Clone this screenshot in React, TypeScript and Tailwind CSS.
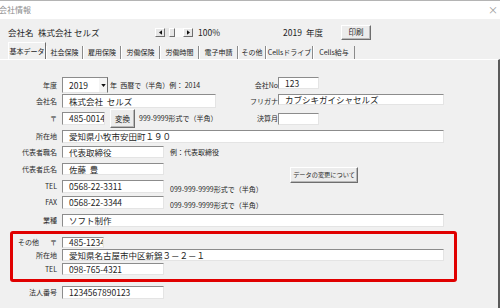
import type { ReactNode } from 'react'

const TABS: { label: string; w: string }[] = [
  { label: '社会保険', w: 'w-[37px]' },
  { label: '雇用保険', w: 'w-[38px]' },
  { label: '労働保険', w: 'w-[39px]' },
  { label: '労働時間', w: 'w-[39px]' },
  { label: '電子申請', w: 'w-[39px]' },
  { label: 'その他', w: 'w-[28px]' },
  { label: 'Cellsドライブ', w: 'w-[47px]' },
  { label: 'Cells給与', w: 'w-[42px]' },
]

// Sunken white text box, like the Excel form controls.
function Field({ className, children }: { className: string; children?: ReactNode }) {
  return (
    <div
      className={`flex shrink-0 items-center overflow-hidden whitespace-nowrap border border-t-[#8c8c8c] border-l-[#8c8c8c] border-r-[#e4e4e4] border-b-[#e4e4e4] bg-white pl-[6px] text-[8.5px] leading-none text-[#1e1e1e] ${className}`}
    >
      {children}
    </div>
  )
}

function Label({ children, className = 'w-[57px]' }: { children: ReactNode; className?: string }) {
  return (
    <div className={`shrink-0 text-right text-[7px] leading-none text-[#2a2a2a] ${className}`}>{children}</div>
  )
}

function Btn({ className, children }: { className: string; children: ReactNode }) {
  return (
    <div
      className={`flex shrink-0 items-center justify-center whitespace-nowrap border border-t-white border-l-white border-r-[#6e6e6e] border-b-[#6e6e6e] bg-[#ececec] leading-none text-[#1e1e1e] shadow-[inset_-1px_-1px_0_#b8b8b8] ${className}`}
    >
      {children}
    </div>
  )
}

function Arrow({ dir }: { dir: 'l' | 'r' }) {
  return (
    <div className="flex h-[9px] w-[10px] items-center justify-center border border-t-white border-l-white border-r-[#6e6e6e] border-b-[#6e6e6e] bg-[#e6e6e6]">
      <svg viewBox="0 0 4 6" width="3" height="5" aria-hidden>
        <polygon points={dir === 'l' ? '4,0 0,3 4,6' : '0,0 4,3 0,6'} fill="#111" />
      </svg>
    </div>
  )
}

export default function App() {
  return (
    <div className="flex h-[308px] w-[500px] flex-col overflow-hidden bg-[#f0f0f0] font-['Noto_Sans_CJK_JP',sans-serif] text-[#1e1e1e]">
      {/* title bar */}
      <div className="flex h-[19px] shrink-0 items-center justify-between border-t border-[#b4b4b4] bg-white">
        <span className="ml-[-1px] text-[8px] leading-none text-[#8c8c8c]">会社情報</span>
        <span className="mr-[2px] text-[10px] leading-none text-[#9a9a9a]">×</span>
      </div>

      {/* header */}
      <div className="flex h-[24px] shrink-0 items-center pl-[8px] pt-[2px] text-[8.5px] leading-none">
        <span className="w-[30px]">会社名</span>
        <span className="w-[117px]">株式会社 セルズ</span>
        <div className="flex w-[38px] items-center">
          <Arrow dir="l" />
          <div className="h-[9px] w-[4px] bg-[#e6e6e6]" />
          <div className="h-[9px] w-[6px] border border-t-white border-l-white border-r-[#6e6e6e] border-b-[#6e6e6e] bg-[#e6e6e6]" />
          <div className="h-[9px] w-[8px] bg-[#fafafa]" />
          <Arrow dir="r" />
        </div>
        <span className="ml-[5px] w-[85px]">100%</span>
        <span className="w-[23px]">2019</span>
        <span className="w-[35px]">年度</span>
        <Btn className="h-[15px] w-[30px] text-[7.5px]">印刷</Btn>
      </div>

      {/* tabs */}
      <div className="flex h-[16px] shrink-0 items-end pl-[8px] text-[7px] leading-none">
        <div className="flex h-[17px] w-[38px] items-center justify-center border-t border-l border-r border-t-white border-l-white border-r-[#6e6e6e]">
          基本データ
        </div>
        {TABS.map((t) => (
          <div
            key={t.label}
            className={`flex h-[13px] items-center justify-center whitespace-nowrap border-l border-r border-l-white border-r-[#8a8a8a] ${t.w}`}
          >
            {t.label}
          </div>
        ))}
      </div>

      {/* tab page */}
      <div className="flex flex-1 flex-col border-t border-r-2 border-t-white border-r-[#5a5a5a] pt-[17px]">
        <div className="flex h-[16px]">
          <div className="flex w-[250px] items-center">
            <Label>年度</Label>
            <div className="ml-[5px] flex h-[16px] w-[46px] items-center border border-t-[#8c8c8c] border-l-[#8c8c8c] border-r-[#6e6e6e] border-b-[#e4e4e4] bg-white pl-[6px] text-[8.5px] leading-none">
              <span className="flex-1">2019</span>
              <div className="flex h-full w-[8px] items-center justify-center bg-[#f4f4f4]">
                <svg viewBox="0 0 6 4" width="5" height="3" aria-hidden>
                  <polygon points="0,0 6,0 3,4" fill="#111" />
                </svg>
              </div>
            </div>
            <span className="ml-[2px] whitespace-nowrap text-[7px] leading-none">年&nbsp;&nbsp;西暦で（半角）例：&nbsp;2014</span>
          </div>
          <div className="flex items-center">
            <Label className="w-[28px] text-left">会社No</Label>
            <Field className="h-[12px] w-[41px] self-start">123</Field>
          </div>
        </div>

        <div className="mt-[1px] flex h-[14px]">
          <div className="flex w-[250px] items-center">
            <Label>会社名</Label>
            <Field className="ml-[5px] h-[14px] w-[154px]">株式会社&nbsp;&nbsp;セルズ</Field>
          </div>
          <div className="flex items-center">
            <Label className="w-[28px] text-left">フリガナ</Label>
            <Field className="h-[11px] w-[166px] self-start">カブシキガイシャセルズ</Field>
          </div>
        </div>

        <div className="mt-[1px] flex h-[19px]">
          <div className="flex w-[250px] items-center">
            <Label>〒</Label>
            <Field className="ml-[5px] h-[13px] w-[43px]">485-0014</Field>
            <Btn className="ml-[5px] h-[19px] w-[25px] text-[7.5px]">変換</Btn>
            <span className="ml-[4px] whitespace-nowrap text-[7px] leading-none">999-9999形式で（半角）</span>
          </div>
          <div className="flex items-center">
            <Label className="w-[28px] text-left">決算月</Label>
            <Field className="h-[12px] w-[41px]">{''}</Field>
          </div>
        </div>

        <div className="mt-[1px] flex h-[14px] items-center">
          <Label>所在地</Label>
          <Field className="ml-[5px] h-[13px] w-[382px]">愛知県小牧市安田町１９０</Field>
        </div>

        <div className="mt-[3px] flex h-[12px] items-center">
          <Label>代表者職名</Label>
          <Field className="ml-[5px] h-[12px] w-[102px]">代表取締役</Field>
          <span className="ml-[6px] text-[7px] leading-none">例：代表取締役</span>
        </div>

        <div className="mt-[5px] flex h-[12px] items-center">
          <Label>代表者氏名</Label>
          <Field className="ml-[5px] h-[12px] w-[102px]">佐藤&nbsp;&nbsp;豊</Field>
          <Btn className="ml-[126px] mt-[4px] h-[16px] w-[68px] self-start text-[6.2px]">データの変更について</Btn>
        </div>

        <div className="mt-[5px] flex h-[13px] items-center">
          <Label>TEL</Label>
          <Field className="ml-[5px] h-[13px] w-[102px]">0568-22-3311</Field>
          <span className="ml-[6px] self-end whitespace-nowrap text-[7px] leading-none">099-999-9999形式で（半角）</span>
        </div>

        <div className="mt-[3px] flex h-[13px] items-center">
          <Label>FAX</Label>
          <Field className="ml-[5px] h-[13px] w-[102px]">0568-22-3344</Field>
          <span className="ml-[6px] self-end whitespace-nowrap text-[7px] leading-none">099-999-9999形式で（半角）</span>
        </div>

        <div className="mt-[5px] flex h-[13px] items-center">
          <Label>業種</Label>
          <Field className="ml-[5px] h-[13px] w-[382px]">ソフト制作</Field>
        </div>

        {/* highlighted block */}
        <div className="ml-[10px] mt-[4px] flex h-[51px] w-[447px] flex-col rounded-[3px] border-[3px] border-[#e00000]">
          <div className="mt-[3px] flex h-[11px] items-center">
            <div className="flex w-[44px] shrink-0 justify-between text-[7px] leading-none text-[#2a2a2a]">
              <span className="ml-[5px]">その他</span>
              <span>〒</span>
            </div>
            <Field className="ml-[5px] h-[11px] w-[42px]">485-1234</Field>
          </div>
          <div className="mt-[1px] flex h-[12px] items-center">
            <Label className="w-[44px]">所在地</Label>
            <Field className="ml-[5px] h-[12px] w-[382px]">愛知県名古屋市中区新錦３－２－１</Field>
          </div>
          <div className="mt-[2px] flex h-[12px] items-center">
            <Label className="w-[44px]">TEL</Label>
            <Field className="ml-[5px] h-[12px] w-[102px]">098-765-4321</Field>
          </div>
        </div>

        <div className="mt-[4px] flex h-[13px] items-center">
          <Label>法人番号</Label>
          <Field className="ml-[5px] h-[13px] w-[102px]">1234567890123</Field>
        </div>
      </div>
    </div>
  )
}
